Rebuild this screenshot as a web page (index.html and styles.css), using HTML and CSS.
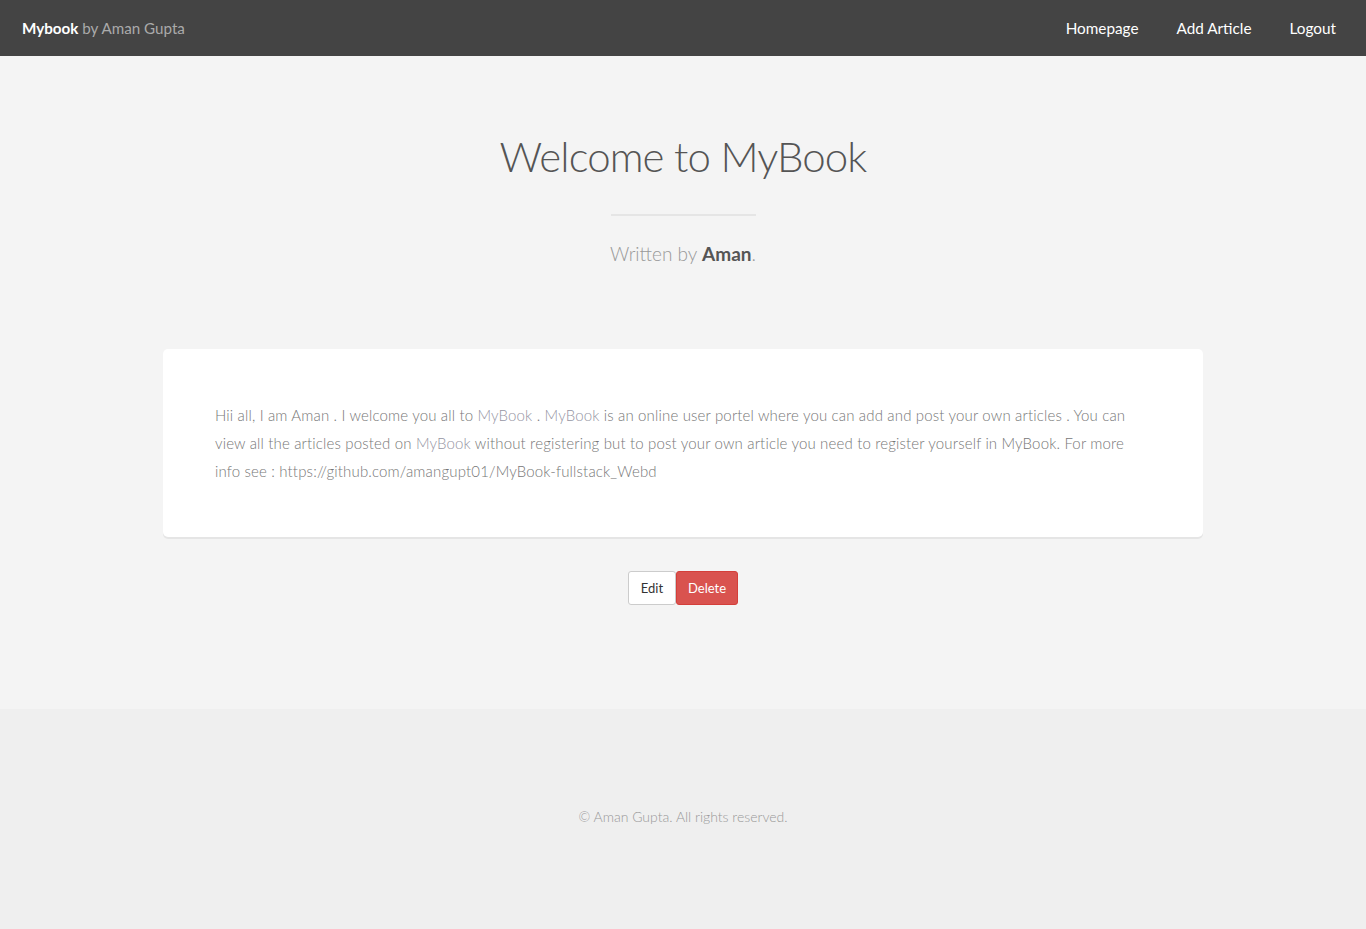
FILE: index.html
```html
<!DOCTYPE html>
<html>
<head>
<meta charset="utf-8">
<link rel="stylesheet" href="styles.css">
</head>
<body>
<header class="topbar">
  <div class="brand"><strong>Mybook</strong> by Aman Gupta</div>
  <nav class="menu">
    <a href="#">Homepage</a>
    <a href="#">Add Article</a>
    <a href="#">Logout</a>
  </nav>
</header>
<main class="main">
  <section class="hero">
    <h1 class="title">Welcome to MyBook</h1>
    <hr class="rule">
    <p class="byline">Written by <strong>Aman</strong>.</p>
  </section>
  <article class="card">
    <p class="body-text">Hii all, I am Aman . I welcome you all to <span class="hl">MyBook</span> . <span class="hl">MyBook</span> is an online user portel where you can add and post your own articles . You can view all the articles posted on <span class="hl">MyBook</span> without registering but to post your own article you need to register yourself in MyBook. For more info see : https://github.com/amangupt01/MyBook-fullstack_Webd</p>
  </article>
  <div class="actions">
    <a href="#" class="btn btn-default">Edit</a><a href="#" class="btn btn-danger">Delete</a>
  </div>
</main>
<footer class="footer">
  <p class="copy">© Aman Gupta. All rights reserved.</p>
</footer>
</body>
</html>
```
FILE: styles.css
```css
html, body {
  margin: 0;
  padding: 0;
}
body {
  font-family: "Lato", "Liberation Sans", sans-serif;
  font-weight: 300;
  color: #777;
  background: #efefef;
}
.topbar {
  height: 56px;
  background: #444;
  display: flex;
  align-items: center;
  justify-content: space-between;
  padding: 0 30px 0 22px;
}
.brand {
  color: #aaa;
  font-size: 15.2px;
  font-weight: 400;
}
.brand strong {
  color: #fff;
  font-weight: 700;
}
.menu {
  display: flex;
  gap: 38px;
}
.menu a {
  color: #fff;
  text-decoration: none;
  font-size: 15.3px;
  font-weight: 400;
}
.main {
  background: #f4f4f4;
  padding: 72px 0 104px;
}
.hero {
  text-align: center;
}
.title {
  margin: 0;
  font-size: 42px;
  font-weight: 300;
  color: #555;
  letter-spacing: -0.9px;
  line-height: 56px;
}
.rule {
  width: 145px;
  border: 0;
  border-top: 2px solid #e5e5e5;
  margin: 30px auto 23px;
}
.byline {
  margin: 0;
  font-size: 19px;
  color: #999;
  line-height: 30px;
}
.byline strong {
  color: #555;
  font-weight: 700;
}
.card {
  width: 936px;
  margin: 80px auto 0;
  background: #fff;
  border-radius: 5px;
  box-shadow: 0 2px 0 #e5e5e5;
  padding: 52px;
}
.body-text {
  margin: 0;
  font-size: 15px;
  letter-spacing: 0.16px;
  line-height: 28px;
}
.hl {
  color: #9595a3;
}
.actions {
  display: flex;
  justify-content: center;
  margin-top: 34px;
}
.btn {
  display: inline-flex;
  align-items: center;
  justify-content: center;
  height: 34px;
  box-sizing: border-box;
  font-size: 13px;
  font-weight: 400;
  text-decoration: none;
  border-radius: 3px;
}
.btn-default {
  width: 48px;
  background: #fff;
  color: #333;
  border: 1px solid #ccc;
}
.btn-danger {
  width: 62px;
  background: #d9534f;
  color: #fff;
  border: 1px solid #d43f3a;
}
.footer {
  height: 220px;
  display: flex;
  justify-content: center;
  padding-top: 99px;
  box-sizing: border-box;
}
.copy {
  margin: 0;
  font-size: 14px;
  color: #999;
}
```
